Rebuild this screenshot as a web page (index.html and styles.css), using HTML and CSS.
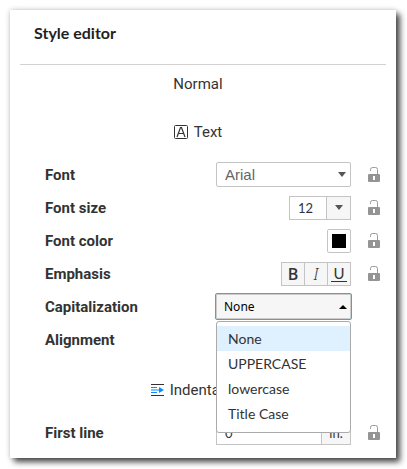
FILE: index.html
```html
<!DOCTYPE html>
<html lang="en">
<head>
    <meta charset="UTF-8">
    <meta name="viewport" content="width=device-width, initial-scale=1.0">
    <title>Style editor</title>
    <link rel="stylesheet" href="styles.css">
</head>
<body>
    <svg width="0" height="0" class="icon-defs" aria-hidden="true">
        <symbol id="lock" viewBox="0 0 12 16">
            <path d="M2.500 4V2.500Q2.500 .5 4.500 .5h3Q9.500 .5 9.500 2.500V7" fill="none" stroke="#999"/>
            <path fill-rule="evenodd" d="M1 7h10q1 0 1 1v6q0 1-1 1H1q-1 0-1-1V8q0-1 1-1zM5 9v4h2V9z" fill="#949494"/>
        </symbol>
    </svg>

    <div class="panel">
        <h1>Style editor</h1>
        <form class="editor">
            <p class="heading style-name">Normal</p>

            <h2 class="heading">
                <svg width="14" height="14" viewBox="0 0 14 14" aria-hidden="true">
                    <rect x=".5" y=".5" width="13" height="13" rx="1" fill="none" stroke="#333"/>
                    <path d="M3 12L6.500 2.500h1L11 12M4.300 8.500h5.400" fill="none" stroke="#333" stroke-width="1.2"/>
                </svg>
                Text
            </h2>

            <div class="row">
                <label for="font">Font</label>
                <div class="dropdown">
                    <select id="font" class="font-select">
                        <option>Arial</option>
                    </select>
                </div>
                <button type="button" class="lock" aria-label="Lock font"><svg width="12" height="16"><use href="#lock"/></svg></button>
            </div>

            <div class="row">
                <label for="fontSize">Font size</label>
                <div class="group">
                    <input type="text" id="fontSize" class="size-input" value="12">
                    <button type="button" class="size-btn" aria-label="Choose size"><span class="arrow"></span></button>
                </div>
                <button type="button" class="lock" aria-label="Lock font size"><svg width="12" height="16"><use href="#lock"/></svg></button>
            </div>

            <div class="row">
                <label for="fontColor">Font color</label>
                <button type="button" id="fontColor" class="color-btn"><span class="swatch"></span></button>
                <button type="button" class="lock" aria-label="Lock font color"><svg width="12" height="16"><use href="#lock"/></svg></button>
            </div>

            <div class="row">
                <span class="label" id="emphasisLabel">Emphasis</span>
                <div class="group emphasis" role="group" aria-labelledby="emphasisLabel">
                    <button type="button" class="bold">B</button>
                    <button type="button" class="italic">I</button>
                    <button type="button" class="underline"><span>U</span></button>
                </div>
                <button type="button" class="lock" aria-label="Lock emphasis"><svg width="12" height="16"><use href="#lock"/></svg></button>
            </div>

            <div class="row">
                <label for="capitalization">Capitalization</label>
                <div class="dropdown open">
                    <select id="capitalization" class="caps-select">
                        <option>None</option>
                        <option>UPPERCASE</option>
                        <option>lowercase</option>
                        <option>Title Case</option>
                    </select>
                    <ul class="menu" role="listbox">
                        <li role="option" class="selected" aria-selected="true">None</li>
                        <li role="option">UPPERCASE</li>
                        <li role="option">lowercase</li>
                        <li role="option">Title Case</li>
                    </ul>
                </div>
            </div>

            <div class="row">
                <span class="label">Alignment</span>
            </div>

            <h2 class="heading">
                <svg width="13" height="12" viewBox="0 0 13 12" aria-hidden="true">
                    <path d="M0 .5h13M0 11.500h13" stroke="#333"/>
                    <path d="M0 3.500h6M0 6h11M0 8.500h6" stroke="#0a8cff" stroke-width="1.2"/>
                    <path d="M8 3l5 3-5 3z" fill="#0a8cff"/>
                </svg>
                Indentation
            </h2>

            <div class="row">
                <label for="firstLine">First line</label>
                <div class="group wide">
                    <input type="text" id="firstLine" class="indent-input" value="0">
                    <span class="unit">in.</span>
                </div>
                <button type="button" class="lock" aria-label="Lock first line"><svg width="12" height="16"><use href="#lock"/></svg></button>
            </div>
        </form>
    </div>
</body>
</html>
```
FILE: styles.css
```css
* {
    box-sizing: border-box;
}

body {
    margin: 0;
    padding: 10px 11px 11px 10px;
    background-color: #fff;
    color: #333;
    font-family: Roboto, sans-serif;
    font-size: 15px;
}

.icon-defs {
    display: none;
}

.panel {
    background: #fff;
    padding: 0 10px 9px;
    box-shadow: 0 0 5px rgba(0, 0, 0, 0.2), 4px 4px 6px rgba(0, 0, 0, 0.7);
}

.panel h1 {
    margin: 0;
    padding: 11px 14px 19px;
    border-bottom: 1px solid #d2d2d2;
    color: #222;
    font: bold 16px/24px Lato, sans-serif;
}

.editor {
    padding: 2px 5px 0 25px;
}

.heading {
    display: flex;
    justify-content: center;
    align-items: center;
    gap: 6px;
    height: 34px;
    margin: 17px 30px 9px 0;
    font-size: 15px;
    font-weight: normal;
}

.style-name {
    margin-top: 0;
    margin-bottom: 0;
}

.style-name + .heading {
    margin-top: 14px;
}

.row {
    display: flex;
    align-items: center;
    height: 33px;
}

.row label, .label {
    margin-right: auto;
    font-weight: bold;
}

input, select, button {
    margin: 0;
    padding: 0;
    border: 1px solid #c4c4c4;
    border-radius: 2px;
    background: #fff;
    color: #333;
    font: 13px Lato, sans-serif;
}

.lock {
    display: flex;
    width: 12px;
    margin-left: 17px;
    margin-right: 1px;
    border: 0;
    background: none;
}

.dropdown {
    position: relative;
    width: 135px;
}

.dropdown select {
    display: block;
    width: 100%;
    height: 25px;
    padding-left: 8px;
    appearance: none;
}

.dropdown::after, .arrow {
    border: 4px solid transparent;
    border-top: 5px solid #555;
    border-bottom: 0;
}

.dropdown::after {
    content: "";
    position: absolute;
    top: 10px;
    right: 5px;
}

.dropdown .font-select {
    color: #666;
    font: 15px "Liberation Sans", sans-serif;
}

.open {
    width: 137px;
    margin-right: 29px;
}

.open .caps-select {
    height: 27px;
    border: 1px solid #3aa5f5;
    box-shadow: inset 0 0 0 1px #ccc;
    background: #f6f6f6;
    color: #000;
    font: 12px "Noto Sans", sans-serif;
}

.open::after {
    top: 12px;
    border-top: 0;
    border-bottom: 4px solid #000;
}

.menu {
    position: absolute;
    z-index: 1;
    top: 28px;
    left: 1px;
    right: 1px;
    margin: 0;
    padding: 4px 0 6px;
    border: 1px solid #aaa;
    border-radius: 3px;
    background: #fff;
    list-style: none;
    font: 14px/25px Lato, sans-serif;
}

.menu li {
    padding-left: 11px;
}

.menu .selected {
    background: #dff0fe;
}

.group {
    display: flex;
    height: 24px;
}

.group > * {
    border-radius: 0;
}

.group > * + * {
    margin-left: -1px;
}

.size-input {
    width: 38px;
    padding-left: 8px;
}

.size-btn, .color-btn {
    display: flex;
    justify-content: center;
    align-items: center;
    width: 25px;
    background: #f6f6f6;
}

.color-btn {
    width: 24px;
    height: 24px;
    background: #fff;
}

.swatch {
    width: 14px;
    height: 14px;
    background: #000;
}

.emphasis button {
    width: 24px;
    background: #f6f6f6;
}

.emphasis .bold {
    font: 600 16px "Open Sans", sans-serif;
}

.emphasis .italic {
    font: italic 300 16px "Noto Sans", sans-serif;
}

.emphasis .underline {
    font: 15px/15px Lato, sans-serif;
}

.underline span {
    display: inline-block;
    padding: 0 2px;
    border-bottom: 1px solid #333;
}

.wide {
    width: 135px;
}

.indent-input {
    flex: 1;
    min-width: 0;
    padding-left: 8px;
}

.unit {
    width: 30px;
    border: 1px solid #c4c4c4;
    background: #f6f6f6;
    font: 13px/22px Lato, sans-serif;
    text-align: center;
}
```
